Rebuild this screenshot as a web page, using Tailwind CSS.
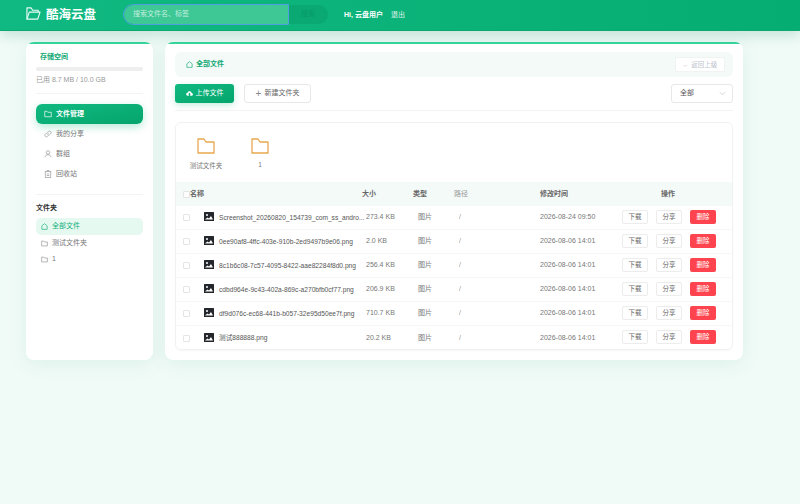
<!DOCTYPE html>
<html lang="zh-CN">
<head>
    <meta charset="UTF-8">
    <meta name="viewport" content="width=device-width, initial-scale=1.0">
    <title>酷海云盘</title>
    <script src="https://cdn.jsdelivr.net/npm/@tailwindcss/browser@4"></script>
</head>
<body class="bg-[#f0fbf7] h-[504px] w-[800px] overflow-hidden font-['Liberation_Sans','Noto_Sans_CJK_SC',sans-serif] text-[7px] text-[#555]">
    <header class="h-[31px] bg-gradient-to-r from-[#10b981] to-[#05ad72] border-b border-[#0ea871] shadow-[0_4px_14px_rgba(5,120,85,0.2)] flex items-center pl-[26px]">
        <svg class="w-[15px] h-[15px] -mt-[3px]" viewBox="0 0 16 16" fill="none" stroke="#e6fbf3" stroke-width="1.2" stroke-linejoin="round"><path d="M1 14V2h4.500l1.500 2.500h6v2"/><path d="M1 14l2.500-7.500H15L12.500 14z"/></svg>
        <span class="ml-[5px] text-[12.500px] font-bold text-white w-[78px]">酷海云盘</span>
        <div class="flex items-center h-[19px] -mt-[1px] w-[204px] rounded-full bg-[#0aa873]">
            <div class="w-[164px] h-[19px] flex items-center pl-[9px] rounded-l-full bg-[#3dc896] outline outline-1 outline-[#4f9fe0] text-[7px] text-white/70">搜索文件名、标签</div>
            <span class="ml-[13px] text-[7px] text-[#079a68]">搜索</span>
        </div>
        <span class="ml-[16px] text-[7px] font-semibold text-white">Hi, 云盘用户</span>
        <span class="ml-[8px] text-[7px] text-white/85">退出</span>
    </header>

    <div class="flex gap-[12px] px-[26px] mt-[11px] w-[743px] box-content">
        <aside class="w-[127px] h-[318px] bg-white rounded-[8px] overflow-hidden shadow-[0_4px_20px_rgba(16,120,85,0.08)]">
            <div class="h-[2px] bg-[#34d399]"></div>
            <div class="px-[10px] pt-[8px]">
                <div class="pl-[4px] text-[7px] font-semibold text-[#10a873]">存储空间</div>
                <div class="h-[4px] mt-[4px] rounded-full bg-[#eeeeee]"></div>
                <div class="mt-[4px] text-[7px] text-[#999]">已用 8.7 MB / 10.0 GB</div>
                <div class="h-px bg-[#f3f3f3] mt-[8px]"></div>

                <nav class="mt-[10px] flex flex-col">
                    <a class="h-[20px] flex items-center rounded-[6px] bg-gradient-to-br from-[#10b981] to-[#05a56c] text-white font-semibold shadow-[0_3px_8px_rgba(16,185,129,0.3)] pl-[8px] gap-[4px]">
                        <svg class="w-[8px] h-[8px]" viewBox="0 0 16 16" fill="none" stroke="currentColor" stroke-width="1.4"><path d="M1.500 13.500v-11h4.500l1.500 2h7v9z"/></svg>文件管理
                    </a>
                    <a class="h-[20px] flex items-center pl-[8px] gap-[4px] text-[#777]">
                        <svg class="w-[8px] h-[8px]" viewBox="0 0 16 16" fill="none" stroke="#999" stroke-width="1.4" stroke-linecap="round"><path d="M7 9.500a3 3 0 0 0 4.300 0l2-2a3 3 0 0 0-4.300-4.300l-1 1"/><path d="M9 6.500a3 3 0 0 0-4.300 0l-2 2a3 3 0 0 0 4.300 4.300l1-1"/></svg>我的分享
                    </a>
                    <a class="h-[20px] flex items-center pl-[8px] gap-[4px] text-[#777]">
                        <svg class="w-[8px] h-[8px]" viewBox="0 0 16 16" fill="none" stroke="#999" stroke-width="1.4"><circle cx="8" cy="5" r="3.500"/><path d="M2 14.500c.5-3.500 3-5 6-5s5.500 1.500 6 5"/></svg>群组
                    </a>
                    <a class="h-[20px] flex items-center pl-[8px] gap-[4px] text-[#777]">
                        <svg class="w-[8px] h-[8px]" viewBox="0 0 16 16" fill="none" stroke="#999" stroke-width="1.4"><rect x="2.500" y="3" width="11" height="12"/><path d="M6 3V1h4v2M5.500 8h5M5.500 11h5"/></svg>回收站
                    </a>
                </nav>
                <div class="h-px bg-[#f3f3f3] mt-[10px]"></div>

                <div class="mt-[8px] text-[7px] font-semibold text-[#333]">文件夹</div>
                <div class="mt-[4px] flex flex-col">
                    <a class="h-[17px] flex items-center rounded-[5px] bg-[#e6f9f1] text-[#10b07a] pl-[5px] gap-[4px]">
                        <svg class="w-[7px] h-[7px]" viewBox="0 0 16 16" fill="none" stroke="currentColor" stroke-width="1.5"><path d="M2 14.500V6.500L8 1.500l6 5v8z"/></svg>全部文件
                    </a>
                    <a class="h-[17px] flex items-center text-[#777] pl-[5px] gap-[4px]">
                        <svg class="w-[7px] h-[7px]" viewBox="0 0 16 16" fill="none" stroke="#888" stroke-width="1.4"><path d="M1.500 13.500v-11h4.500l1.500 2h7v9z"/></svg>测试文件夹
                    </a>
                    <a class="h-[16px] flex items-center text-[#777] pl-[5px] gap-[4px]">
                        <svg class="w-[7px] h-[7px]" viewBox="0 0 16 16" fill="none" stroke="#888" stroke-width="1.4"><path d="M1.500 13.500v-11h4.500l1.500 2h7v9z"/></svg>1
                    </a>
                </div>
            </div>
        </aside>

        <main class="w-[578px] h-[318px] bg-white rounded-[8px] overflow-hidden shadow-[0_4px_20px_rgba(16,120,85,0.08)]">
            <div class="h-[2px] bg-[#34d399]"></div>
            <div class="px-[10px] pt-[8px]">
                <div class="h-[25px] rounded-[6px] bg-[#f4faf8] flex items-center justify-between pl-[11px] pr-[8px]">
                    <div class="flex items-center gap-[3px] text-[#10a873] font-semibold">
                        <svg class="w-[7px] h-[7px]" viewBox="0 0 16 16" fill="none" stroke="currentColor" stroke-width="1.5"><path d="M2 14.500V6.500L8 1.500l6 5v8z"/></svg>全部文件
                    </div>
                    <div class="w-[50px] h-[15px] bg-white border border-[#eff3f2] rounded-[2px] flex items-center justify-center gap-[3px] text-[6.500px] text-[#bcc3cc]">← 返回上级</div>
                </div>
                <div class="flex items-center mt-[7px]">
                    <button class="w-[59px] h-[19px] rounded-[3px] bg-gradient-to-br from-[#10b981] to-[#05a56c] text-white shadow-[0_2px_6px_rgba(16,185,129,0.25)] flex items-center justify-center gap-[3px] text-[7px]">
                        <svg class="w-[7px] h-[7px]" viewBox="0 0 16 16" fill="white"><path d="M4 13a3.500 3.500 0 0 1-.5-7 5 5 0 0 1 9.500 1 3 3 0 0 1-.5 6H9.500V9.500H11L8 6 5 9.500h1.500V13z"/></svg>上传文件
                    </button>
                    <button class="ml-[10px] w-[67px] h-[19px] rounded-[3px] bg-white border border-[#e8e8e8] text-[#666] flex items-center justify-center gap-[3px] text-[7px]">
                        <span class="text-[#888] text-[10px] leading-none">+</span>新建文件夹
                    </button>
                    <div class="ml-auto w-[62px] h-[19px] rounded-[3px] bg-white border border-[#e8e8e8] flex items-center justify-between pl-[8px] pr-[6px] text-[#555] text-[7px]">
                        全部
                        <svg class="w-[7px] h-[7px]" viewBox="0 0 16 16" fill="none" stroke="#bbb" stroke-width="1.400"><path d="M2 5l6 6 6-6"/></svg>
                    </div>
                </div>
                <div class="h-px bg-[#f3f3f3] mt-[7px]"></div>

                <div class="mt-[11px] h-[228px] rounded-[6px] border border-[#f0f2f1] shadow-[0_1px_2px_rgba(0,0,0,0.04)] overflow-hidden">
                    <div class="h-[59px] flex pt-[15px]">
                        <div class="w-[54px] ml-[3px] flex flex-col items-center">
                            <svg class="w-[18px] h-[16px]" viewBox="0 0 18 16" fill="none" stroke="#e8a84f" stroke-width="1.300" stroke-linejoin="round"><path d="M1 15V1h6l2 3h8v11z"/></svg>
                            <span class="mt-[7px] text-[#777] text-[6.500px]">测试文件夹</span>
                        </div>
                        <div class="w-[54px] flex flex-col items-center">
                            <svg class="w-[18px] h-[16px]" viewBox="0 0 18 16" fill="none" stroke="#e8a84f" stroke-width="1.300" stroke-linejoin="round"><path d="M1 15V1h6l2 3h8v11z"/></svg>
                            <span class="mt-[6px] text-[#777] text-[6.500px]">1</span>
                        </div>
                    </div>

                    <div class="h-[24px] bg-[#f4faf8] flex items-center text-[7px] font-semibold text-[#666]">
                        <span class="w-[7px] h-[7px] ml-[7px] bg-white border border-[#e5e5e5] rounded-[1px]"></span>
                        <span class="w-[172px]">名称</span>
                        <span class="w-[51px]">大小</span>
                        <span class="w-[41px]">类型</span>
                        <span class="w-[86px] font-normal text-[#999]">路径</span>
                        <span class="w-[121px]">修改时间</span>
                        <span>操作</span>
                    </div>

                    <div id="rows"></div>
                </div>
            </div>
        </main>
    </div>

    <script>
        const files = [
            ['Screenshot_20260820_154739_com_ss_andro...', '273.4 KB', '2026-08-24 09:50'],
            ['0ee90af8-4ffc-403e-910b-2ed9497b9e06.png', '2.0 KB', '2026-08-06 14:01'],
            ['8c1b6c08-7c57-4095-8422-aae82284f8d0.png', '256.4 KB', '2026-08-06 14:01'],
            ['cdbd964e-9c43-402a-869c-a270bfb0cf77.png', '206.9 KB', '2026-08-06 14:01'],
            ['df9d076c-ec68-441b-b057-32e95d50ee7f.png', '710.7 KB', '2026-08-06 14:01'],
            ['测试888888.png', '20.2 KB', '2026-08-06 14:01']
        ];

        const rowsEl = document.getElementById('rows');
        files.forEach((f, i) => {
            const row = document.createElement('div');
            row.className = i < files.length - 1
                ? 'h-[24px] flex items-center border-b border-[#f7f7f7] text-[7px] text-[#666]'
                : 'h-[24px] flex items-center text-[7px] text-[#666]';
            row.innerHTML = `
                <span class="w-[7px] h-[7px] ml-[7px] bg-white border border-[#e5e5e5] rounded-[1px]"></span>
                <svg class="w-[10px] h-[9px] ml-[14px] -mt-[2px]" viewBox="0 0 10 9"><rect width="10" height="9" rx="0.5" fill="#23272b"/><circle cx="3" cy="3" r="1" fill="#fff"/><path d="M1 7.500l2.500-2 1.500 1 2-2.500 2 3.500z" fill="#fff"/></svg>
                <span class="w-[147px] ml-[5px] whitespace-nowrap text-[6.650px] text-[#555]">${f[0]}</span>
                <span class="w-[52px] text-[#777]">${f[1]}</span>
                <span class="w-[41px] text-[#777]">图片</span>
                <span class="w-[81px] text-[#999]">/</span>
                <span class="w-[82px] text-[#777]">${f[2]}</span>
                <button class="w-[26px] h-[14px] -mt-[2px] bg-white border border-[#ececec] rounded-[2px] text-[#666] text-[6.500px]">下载</button>
                <button class="w-[26px] h-[14px] -mt-[2px] ml-[8px] bg-white border border-[#ececec] rounded-[2px] text-[#666] text-[6.500px]">分享</button>
                <button class="w-[26px] h-[14px] -mt-[2px] ml-[8px] bg-[#ff444f] rounded-[2px] text-white text-[6.500px]">删除</button>`;
            rowsEl.appendChild(row);
        });
    </script>
</body>
</html>
